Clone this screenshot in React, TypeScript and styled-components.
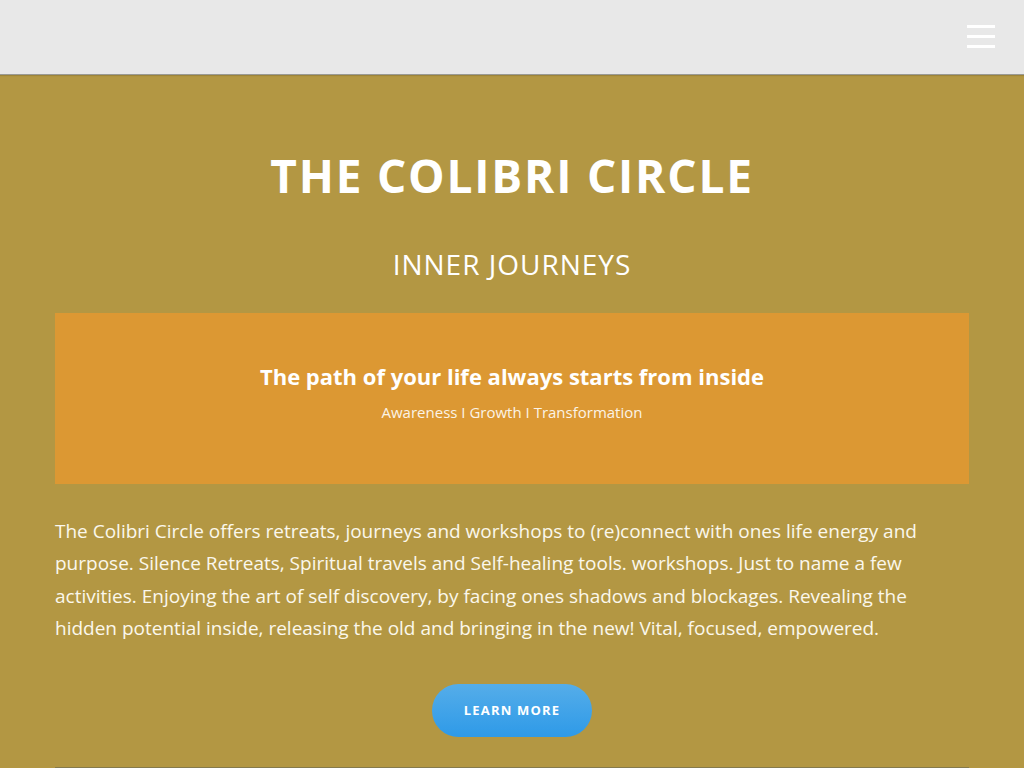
import styled, { createGlobalStyle } from 'styled-components'

const GlobalStyle = createGlobalStyle`
  html, body {
    margin: 0;
    padding: 0;
    background: #b39743;
    font-family: 'Open Sans', 'Liberation Sans', sans-serif;
  }
`

const Page = styled.div`
  min-height: 768px;
  background: #b39743;
  color: #fff;
`

const Header = styled.header`
  height: 74px;
  background: #e8e8e8;
  border-bottom: 1px solid #9a9a94;
  box-shadow: 0 1px 1px rgba(0, 0, 0, 0.12);
  display: flex;
  align-items: center;
  justify-content: flex-end;
  padding: 0 29px;
`

const MenuButton = styled.button`
  width: 28px;
  padding: 0;
  margin-top: -1px;
  border: 0;
  background: transparent;
  display: flex;
  flex-direction: column;
  gap: 7px;
  cursor: pointer;
`

const Bar = styled.span`
  display: block;
  height: 3px;
  background: #fff;
`

const Main = styled.main`
  padding: 72px 55px 0;
  display: flex;
  flex-direction: column;
  align-items: center;
`

const Title = styled.h1`
  margin: 0;
  font-size: 46px;
  line-height: 56px;
  font-weight: 700;
  letter-spacing: 1.8px;
  text-align: center;
`

const Subtitle = styled.h2`
  margin: 43px 0 0;
  font-size: 28px;
  line-height: 36px;
  font-weight: 400;
  letter-spacing: 1px;
  text-align: center;
`

const Banner = styled.section`
  align-self: stretch;
  margin-top: 31px;
  height: 171px;
  box-sizing: border-box;
  padding-top: 48px;
  background: #dc9833;
  text-align: center;
`

const BannerHeading = styled.h3`
  margin: 0;
  font-size: 22px;
  line-height: 30px;
  font-weight: 700;
`

const BannerTags = styled.p`
  margin: 11px 0 0;
  font-size: 15px;
  line-height: 20px;
  color: #fbf3e6;
`

const Intro = styled.p`
  align-self: stretch;
  margin: 31px 0 0;
  font-size: 19px;
  line-height: 32.4px;
  color: #fbf7ec;
`

const LearnMore = styled.a`
  margin-top: 39px;
  width: 160px;
  height: 53px;
  border-radius: 27px;
  background: linear-gradient(#55ade9, #2e9ae8);
  display: flex;
  align-items: center;
  justify-content: center;
  font-size: 13px;
  font-weight: 700;
  letter-spacing: 1.2px;
  color: #fff;
  text-decoration: none;
  cursor: pointer;
`

const Divider = styled.hr`
  align-self: stretch;
  margin: 30px 0 0;
  border: 0;
  border-top: 1px solid #857a4c;
`

export default function App() {
  return (
    <Page>
      <GlobalStyle />
      <Header>
        <MenuButton aria-label="Menu">
          <Bar />
          <Bar />
          <Bar />
        </MenuButton>
      </Header>
      <Main>
        <Title>THE COLIBRI CIRCLE</Title>
        <Subtitle>INNER JOURNEYS</Subtitle>
        <Banner>
          <BannerHeading>The path of your life always starts from inside</BannerHeading>
          <BannerTags>Awareness I Growth I Transformation</BannerTags>
        </Banner>
        <Intro>
          The Colibri Circle offers retreats, journeys and workshops to (re)connect with ones life
          energy and purpose. Silence Retreats, Spiritual travels and Self-healing tools. workshops.
          Just to name a few activities. Enjoying the art of self discovery, by facing ones shadows
          and blockages. Revealing the hidden potential inside, releasing the old and bringing in the
          new! Vital, focused, empowered.
        </Intro>
        <LearnMore>LEARN MORE</LearnMore>
        <Divider />
      </Main>
    </Page>
  )
}
